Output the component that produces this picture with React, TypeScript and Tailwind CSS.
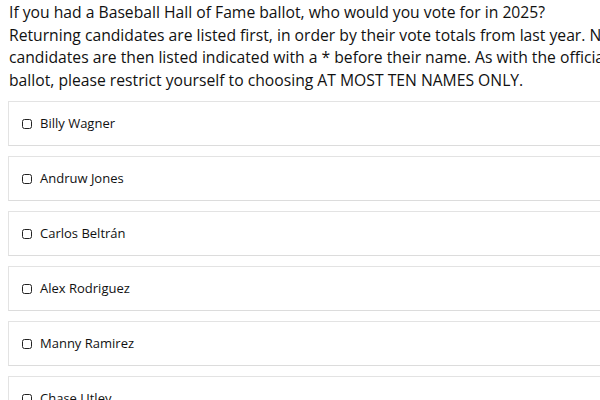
const candidates = [
  'Billy Wagner',
  'Andruw Jones',
  'Carlos Beltrán',
  'Alex Rodriguez',
  'Manny Ramirez',
  'Chase Utley',
]

const intro = [
  'If you had a Baseball Hall of Fame ballot, who would you vote for in 2025?',
  'Returning candidates are listed first, in order by their vote totals from last year. New',
  'candidates are then listed indicated with a * before their name. As with the official',
  'ballot, please restrict yourself to choosing AT MOST TEN NAMES ONLY.',
]

export default function App() {
  return (
    <div className="h-[400px] w-[600px] overflow-hidden bg-white">
      <div
        className="w-[660px] pl-[9px]"
        style={{ fontFamily: '"Open Sans", "Noto Sans", sans-serif' }}
      >
        <p className="pt-px text-[15.7px] leading-[22.5px] text-[#111]">
          {intro.map((line) => (
            <span key={line} className="block whitespace-nowrap">
              {line}
            </span>
          ))}
        </p>

        <div className="mt-[10px] -ml-px flex flex-col gap-[10px]">
          {candidates.map((name) => (
            <label
              key={name}
              className="flex h-[45px] items-center border border-[#e3e3e3] border-b-[#dcdcdc] pl-[13px]"
            >
              <span className="h-[10px] w-[10px] shrink-0 rounded-[2.5px] border-[1.5px] border-[#222]" />
              <span className="ml-[8px] text-[13px] text-[#111]">{name}</span>
            </label>
          ))}
        </div>
      </div>
    </div>
  )
}
